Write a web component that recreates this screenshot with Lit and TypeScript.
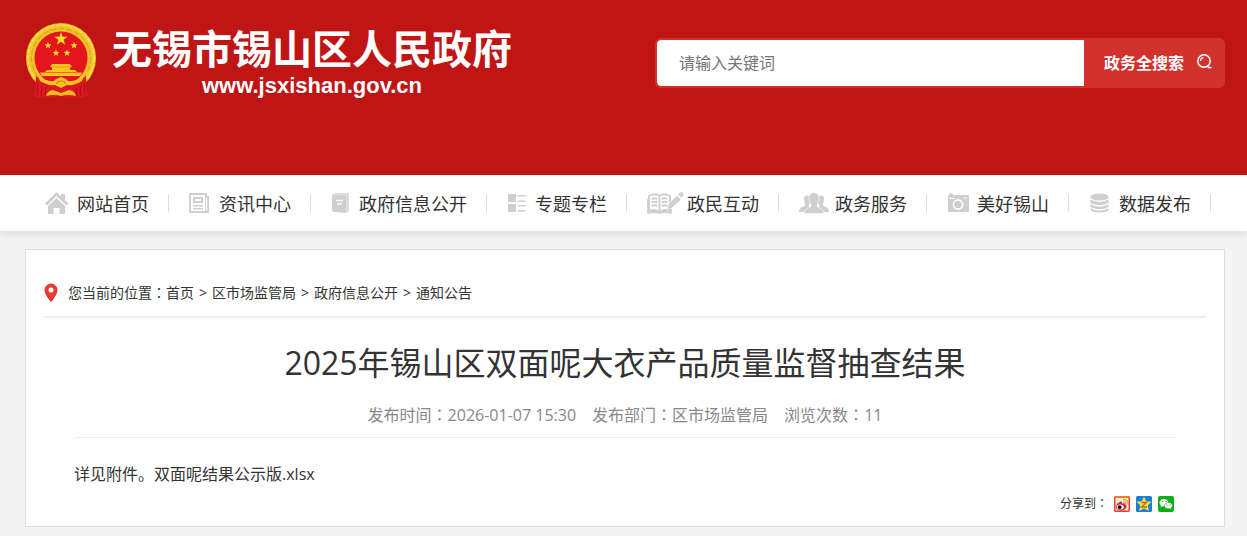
import { LitElement, html, css, svg } from "lit";
import { customElement } from "lit/decorators.js";

interface NavItem {
  label: string;
  icon: unknown;
  width: number;
  slot: number;
}

const navItems: NavItem[] = [
  {
    label: "网站首页", width: 24, slot: 32,
    icon: svg`<path d="M0 11.5 11.5 0 16 4.4V2h4v6.2l3.5 3.3-2 2L11.5 4 2 13.5z"/><path d="M3 14 11.5 6 20 14v8h-5.500v-6H8.500v6H3z"/>`,
  },
  {
    label: "资讯中心", width: 21, slot: 30,
    icon: svg`<path fill-rule="evenodd" d="M0 1h18v3h2v17H0zM2 3v16h14V3zM16.800 6v12.500h1.400V6z"/><path fill-rule="evenodd" d="M4 5h10v6H4zM6 7v2h6V7zM4 13h10v1.500H4zM4 16h10v1.500H4z"/>`,
  },
  {
    label: "政府信息公开", width: 19, slot: 28,
    icon: svg`<path d="M1 3 4 1h14v18l-3 2V4H1z" opacity=".7"/><path d="M1 3.500h14V21L3 20q-2-.4-2-2z"/><path d="M5 8.500h7M6 12h5" stroke="#fff" stroke-width="1.500"/>`,
  },
  {
    label: "专题专栏", width: 19, slot: 28,
    icon: svg`<path d="M1 2h8v8H1zM1 12h8v8H1zM10.500 3h8v1.500h-8zM10.500 8.500h8V10h-8zM10.500 13h8v1.500h-8zM10.500 18h8v1.500h-8z"/>`,
  },
  {
    label: "政民互动", width: 37, slot: 40,
    icon: svg`<path d="M2 4Q8 .5 12.500 4 17 .5 23 4v15q-6-2.500-10.500 1Q8 16.500 2 19z" fill="#fff" stroke="#cfcfcf" stroke-width="2"/><path d="M12.500 4v16M4.500 7q3-1.500 6 0M4.500 10.500q3-1.500 6 0M4.500 14q3-1.500 6 0M14.500 7q3-1.500 6 0M14.500 10.500q3-1.500 6 0M14.500 14q3-1.500 6 0M1 7v14q7-2 11.500 0Q17 19 24 21v-4" fill="none" stroke="#cfcfcf" stroke-width="1.800"/><path d="m20 17.500 2-6L30 3.500l4 4-8.500 8zM31 2.500l2-2.500h2.500L37 2.500 34.500 6z" stroke="#fff" stroke-width=".4"/>`,
  },
  {
    label: "政务服务", width: 31, slot: 36,
    icon: svg`<path d="M0 20q0-4.500 5.500-6 1.500-.8.5-2.500-3-7 1.500-8 5.500-.5 4 6-.7 3-2 4l4 6.500zM30 20q0-4.500-5.500-6-1.500-.8-.5-2.500 3-7-1.500-8-5.500-.5-4 6 .7 3 2 4l-4 6.500z"/><path d="M5 21.500q0-4.500 5.500-6 2.500-.7 1-3.500-4.500-10.500 3.500-11.500 8 1 3.500 11.500-1.500 2.800 1 3.500 5.500 1.500 5.500 6z" stroke="#fff" stroke-width=".6"/>`,
  },
  {
    label: "美好锡山", width: 23, slot: 30,
    icon: svg`<path d="M1 4q0-1 1-1V1.500h4V3h15q1 0 1 1v15q0 1-1 1H2q-1 0-1-1z"/><circle cx="11" cy="12.500" r="4.600" fill="none" stroke="#fff" stroke-width="1.600"/><path d="M2.500 6.500h5M16.500 6h3.500" stroke="#fff" stroke-width="1.200"/>`,
  },
  {
    label: "数据发布", width: 21, slot: 30,
    icon: svg`<path d="M1.500 5q0-3.500 9-3.500T19.500 5v12q0 3.500-9 3.500T1.500 17z"/><path d="M1.500 7q9 4.500 18 0M1.500 11.500q9 5 18 0M1.500 15.500q9 5 18 0" fill="none" stroke="#fff" stroke-width="1.300"/>`,
  },
];

const star = (x: number, y: number, r: number) => {
  const points = Array.from({ length: 10 }, (_, i) => {
    const radius = i % 2 ? r * 0.4 : r;
    const angle = (Math.PI * i) / 5 - Math.PI / 2;
    return `${(x + radius * Math.cos(angle)).toFixed(2)},${(y + radius * Math.sin(angle)).toFixed(2)}`;
  });
  return svg`<polygon fill="#fcdc30" points=${points.join(" ")} />`;
};

const emblem = html`<svg width="70" height="76" viewBox="0 0 70 76" aria-hidden="true">
  <circle cx="35" cy="35" r="35" fill="#f2c02a" />
  <circle cx="35" cy="35" r="33" fill="none" stroke="#fbdc45" stroke-width="2" stroke-dasharray="5 1" />
  <circle cx="35" cy="35" r="29.500" fill="none" stroke="#dda01a" stroke-width="1" stroke-dasharray="6 2" />
  <circle cx="35" cy="35" r="26.500" fill="#e4151b" />
  ${star(35, 16, 7)}${star(22, 22.5, 3.8)}${star(48, 22.5, 3.8)}${star(30, 30, 3.6)}${star(41, 30, 3.6)}
  <path d="M26 41h18l2 3h-2v3h5l2 2H19l2-2h5v-3h-2z" fill="#f8c422" />
  <path d="M25 44h20" stroke="#d99713" stroke-width=".8" />
  <path d="M14 49.500h42l-2 3.500H16z" fill="#f8c422" />
  <path d="M16 54h38l-7 6H23z" fill="#e4151b" />
  <path d="M10 53q9 8 18 8l3 14q-6-1.500-11 0-6 0-12-2 2-9 2-20zM60 53q-9 8-18 8l-3 14q6-1.500 11 0 6 0 12-2-2-9-2-20z" fill="#db1820" />
  <path d="M12 60l-1 12M16 63l-1 10M20 64l-1 10M58 60l1 12M54 63l1 10M50 64l1 10" stroke="#ae0e16" stroke-width="1" />
  <path d="M26 61h18l-2 10H28z" fill="#db1820" />
  <path d="M12 53q9 6 16 5l2-2 5-2 5 2 2 2q7 1 16-5l-2 5q-8 5-15 4l-6 3-6-3q-7 1-15-4z" fill="#f6c220" />
  <path d="M31 61q0-3 4-3t4 3" fill="none" stroke="#c9820f" stroke-width="1.200" />
  <path d="M20 73q1-5 7-6l8 3 8-3q6 1 7 6-8-2-15 0-7-2-15 0z" fill="#f3bb1c" />
</svg>`;

@customElement("app-root")
export class AppRoot extends LitElement {
  static styles = css`
    :host {
      display: block;
      min-height: 100vh;
      background: #f4f4f4;
      color: #333;
      font-family: "Open Sans", "Noto Sans CJK SC", sans-serif;
      font-size: 16px;
    }
    * { box-sizing: border-box; }
    a { color: inherit; text-decoration: none; }
    svg { display: block; flex: none; }
    .shell { padding: 0 22px 0 25px; }
    .header {
      position: relative;
      z-index: 1;
      display: flex;
      justify-content: space-between;
      align-items: flex-start;
      height: 175px;
      background: #c01515;
    }
    .brand {
      display: flex;
      gap: 16px;
      padding: 23px 0 0 1px;
      color: #fff;
    }
    .names { display: flex; flex-direction: column; align-items: center; }
    .name {
      margin: 0;
      font: 700 40px/48px "Noto Sans CJK SC", sans-serif;
      white-space: nowrap;
    }
    .domain { padding-top: 4px; font: bold 22px/22px "Liberation Sans", sans-serif; }
    .search {
      display: flex;
      flex: 0 1 570px;
      height: 50px;
      margin-top: 38px;
      border: 2px solid #d1322e;
      border-radius: 6px;
      background: #d1322e;
      overflow: hidden;
    }
    .query {
      flex: 1;
      min-width: 0;
      border: 0;
      padding: 0 22px;
      border-radius: 4px 0 0 4px;
      background: #fff;
      color: #333;
      font: inherit;
      outline: 0;
    }
    .query::placeholder { color: #757575; opacity: 1; }
    .go {
      display: flex;
      align-items: center;
      gap: 12px;
      padding: 0 11px 0 20px;
      border: 0;
      background: #d1322e;
      color: #fff;
      font: bold 16px/24px "Open Sans", "Noto Sans CJK SC", sans-serif;
      white-space: nowrap;
    }
    .nav {
      display: flex;
      height: 56px;
      align-items: center;
      background: #fff;
      box-shadow: 0 2px 8px 1px #dcdcdc;
    }
    .item {
      display: flex;
      align-items: center;
      height: 18px;
      padding: 0 19px 0 20px;
      border-right: 1px solid #ddd;
      font-size: 18px;
      white-space: nowrap;
    }
    .slot { flex: none; fill: #cfcfcf; }
    .main { padding-top: 18px; padding-bottom: 9px; }
    .card {
      padding: 29px 18px 14px;
      border: 1px solid #ddd;
      background: #fff;
    }
    .crumbs {
      display: flex;
      align-items: center;
      gap: 5px;
      height: 39px;
      padding-bottom: 10px;
      border-bottom: 2px solid #eee;
      font-size: 14px;
      line-height: 20px;
    }
    .pin { margin-right: 5px; }
    .lead { margin-right: -5px; }
    .colon { font-family: "Noto Sans CJK TC", sans-serif; }
    .article { padding: 0 30px; }
    .title {
      margin: 0;
      padding-top: 21px;
      font-size: 32px;
      font-weight: 400;
      line-height: 48px;
      text-align: center;
    }
    .meta {
      display: flex;
      justify-content: center;
      gap: 16px;
      padding: 15px 0 10px;
      border-bottom: 1px solid #eee;
      color: #888;
      line-height: 24px;
    }
    .body { margin: 0; padding-top: 24px; line-height: 24px; }
    .share {
      display: flex;
      justify-content: flex-end;
      align-items: center;
      gap: 6px;
      padding: 9px 2px 0 0;
      font-size: 12px;
      line-height: 16px;
    }
  `;

  render() {
    const colon = html`<span class="colon">：</span>`;
    return html`
      <header class="header shell">
        <a class="brand" href="#">
          ${emblem}
          <div class="names">
            <h2 class="name">无锡市锡山区人民政府</h2>
            <span class="domain">www.jsxishan.gov.cn</span>
          </div>
        </a>
        <form class="search" @submit=${(e: Event) => e.preventDefault()}>
          <input class="query" type="text" aria-label="请输入关键词" placeholder="请输入关键词" />
          <button class="go" type="submit">
            政务全搜索
            <svg width="16" height="20" viewBox="0 0 16 20" fill="none" stroke="#fff" stroke-width="1.500" aria-hidden="true">
              <circle cx="8" cy="8" r="6.200" /><path d="M4.500 8Q4.500 5 7.500 4.500" stroke-width="1.200" /><path d="M11 12.500l1.500 2h3" />
            </svg>
          </button>
        </form>
      </header>
      <nav class="nav shell">
        ${navItems.map(
          (item) => html`<a class="item" href="#">
            <span class="slot" style="width:${item.slot}px">
              <svg width=${item.width} height="22" viewBox="0 0 ${item.width} 22" aria-hidden="true">${item.icon}</svg>
            </span>${item.label}</a>`
        )}
      </nav>
      <main class="main shell">
        <div class="card">
          <div class="crumbs">
            <svg class="pin" width="14" height="20" viewBox="0 0 14 20" aria-hidden="true">
              <path d="M7 1a6 6 0 0 1 6 6.200Q13 11 7 18.500 1 11 1 7.200A6 6 0 0 1 7 1z" fill="#ee3a32" stroke="#cf2b2c" />
              <circle cx="7" cy="7" r="2.500" fill="#fff" />
            </svg>
            <span class="lead">您当前的位置${colon}</span>
            <a href="#">首页</a><span>&gt;</span>
            <a href="#">区市场监管局</a><span>&gt;</span>
            <a href="#">政府信息公开</a><span>&gt;</span>
            <a href="#">通知公告</a>
          </div>
          <article class="article">
            <h1 class="title">2025年锡山区双面呢大衣产品质量监督抽查结果</h1>
            <div class="meta">
              <span>发布时间${colon}2026-01-07 15:30</span>
              <span>发布部门${colon}区市场监管局</span>
              <span>浏览次数${colon}11</span>
            </div>
            <p class="body">详见附件。<a href="#">双面呢结果公示版.xlsx</a></p>
            <div class="share">
              <span>分享到${colon}</span>
              <a href="#" aria-label="新浪微博"><svg width="16" height="16" viewBox="0 0 16 16">
                <rect x=".75" y=".75" width="14.500" height="14.500" rx="1" fill="#ecebe8" stroke="#e4402a" stroke-width="1.500" />
                <path d="M1 1h14" stroke="#ef7d13" stroke-width="2" />
                <path d="M2 10.500Q3 7 6.500 5.500q2 0 1.500 2 3-1 3 1 2.500 1 1 3.500Q10 15 6 14.500 2 14 2 10.500z" fill="#d9202a" />
                <ellipse cx="6.300" cy="11" rx="3.500" ry="2.600" fill="#fff" /><circle cx="5.700" cy="11.200" r="1.900" fill="#111" />
                <path d="M9.500 6q3-.5 2.500 2.500M9 3.700q5.500-.5 5 4.800" fill="none" stroke="#f39a1d" stroke-width="1.300" />
              </svg></a>
              <a href="#" aria-label="QQ空间"><svg width="16" height="16" viewBox="0 0 16 16">
                <rect width="16" height="16" rx="1.500" fill="#1681d8" />
                <path d="m8 .5 2.200 4.800 5.300.5-3.800 3.700 1.200 5.500L8 12.500 3.100 15l1.200-5.500L.5 5.800l5.300-.5z" fill="#ffd94a" />
                <path d="M5.500 6.500h5l-5 4.500h5.500" fill="none" stroke="#b8720b" stroke-width="1.300" />
              </svg></a>
              <a href="#" aria-label="微信"><svg width="16" height="16" viewBox="0 0 16 16">
                <rect width="16" height="16" rx="2" fill="#0eae18" />
                <path d="M6.300 3C3.500 3 1.500 4.700 1.500 6.800q0 1.700 1.500 2.800l-.5 1.600 2-1 2 .3 4-4Q9.500 3 6.300 3z" fill="#fff" />
                <path d="M10.500 6.500c-2.400 0-4 1.400-4 3.200s1.600 3.100 4 3.100l1.200-.2 1.500.8-.3-1.300q1.600-1 1.600-2.500c0-1.700-1.600-3.100-4-3.100z" fill="#fff" stroke="#0eae18" stroke-width=".6" />
                <path d="M4.200 5.500h1.200M7.500 5.500h1.200M8.500 9h1M11.500 9h1" stroke="#0eae18" stroke-width="1.200" />
              </svg></a>
            </div>
          </article>
        </div>
      </main>
    `;
  }
}
